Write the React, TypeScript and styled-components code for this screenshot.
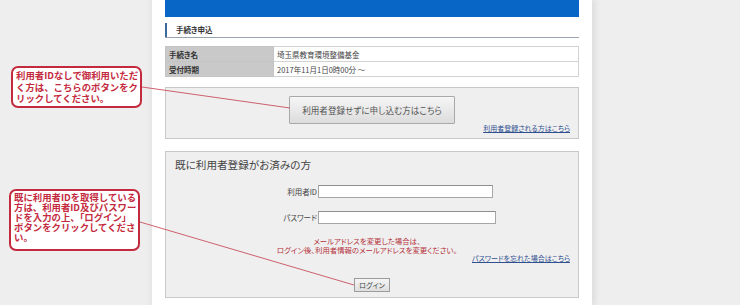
import React from "react";
import styled, { createGlobalStyle } from "styled-components";

const GlobalStyle = createGlobalStyle`
  html, body { margin: 0; padding: 0; background: #eeeeee; }
  body {
    font-family: "Noto Sans CJK JP", "Noto Sans", "Liberation Sans", sans-serif;
    font-feature-settings: "palt";
    color: #333;
  }
`;

const Page = styled.div`
  position: relative;
  width: 740px;
  height: 305px;
  overflow: hidden;
  background: #eeeeee;
  display: flex;
`;

const Column = styled.div`
  margin-left: 152px;
  width: 414px;
  padding: 0 13px;
  background: #ffffff;
  box-shadow: -3px 0 3px #e6e6e6, 4px 0 4px #e0e0e0;
  display: flex;
  flex-direction: column;
`;

const TopBar = styled.div`
  height: 17px;
  background: #0866c6;
`;

const HeadingRow = styled.div`
  margin-top: 6px;
  border-bottom: 1px solid #9aa4ae;
`;

const HeadingText = styled.div`
  height: 14px;
  line-height: 14px;
  border-left: 2px solid #3c6a98;
  padding-left: 9px;
  font-size: 7.5px;
  font-weight: bold;
  color: #333;
`;

const InfoTable = styled.table`
  margin-top: 8px;
  width: 414px;
  border-collapse: collapse;
  font-size: 7.5px;
`;

const LabelCell = styled.th`
  width: 104px;
  height: 14px;
  padding: 0 0 0 3px;
  text-align: left;
  background: #c9c9c9;
  border: 1px solid #c4c4c4;
  font-weight: bold;
  color: #333;
  line-height: 13px;
`;

const ValueCell = styled.td`
  height: 14px;
  padding: 0 0 0 3px;
  border: 1px solid #d2d2d2;
  color: #444;
  line-height: 13px;
`;

const Panel = styled.div<{ $top: number; $height: number }>`
  margin-top: ${(p) => p.$top}px;
  height: ${(p) => p.$height}px;
  box-sizing: border-box;
  background: #efefef;
  border: 1px solid #c8c8c8;
  display: flex;
  flex-direction: column;
`;

const GuestButton = styled.button`
  align-self: center;
  margin-top: 8px;
  width: 166px;
  height: 28px;
  border: 1px solid #a9a9a9;
  border-radius: 1px;
  background: linear-gradient(#f6f6f6, #dcdcdc);
  color: #555;
  font-family: inherit;
  font-feature-settings: "palt";
  font-size: 8.6px;
  padding: 0;
`;

const LinkRow = styled.div<{ $top?: number }>`
  display: flex;
  justify-content: flex-end;
  padding-right: 8px;
  margin-top: ${(p) => p.$top ?? 0}px;
`;

const TextLink = styled.a`
  font-size: 7px;
  line-height: 9px;
  color: #2f4f8f;
  text-decoration: underline;
`;

const PanelTitle = styled.div`
  margin-top: 6px;
  padding-left: 9px;
  font-size: 10.6px;
  line-height: 14px;
  color: #444;
`;

const FormGrid = styled.div`
  margin-top: 13px;
  display: grid;
  grid-template-columns: 152px auto;
  row-gap: 13px;
  align-items: center;
`;

const FieldLabel = styled.label`
  text-align: right;
  padding-right: 1px;
  font-size: 7.5px;
  color: #444;
`;

const TextInput = styled.input<{ $w: number }>`
  width: ${(p) => p.$w}px;
  height: 13px;
  box-sizing: border-box;
  border: 1px solid #a6a6a6;
  border-top-color: #8e8e8e;
  background: #fff;
  padding: 0;
  margin: 0;
`;

const Notice = styled.div`
  margin-top: 12px;
  text-align: center;
  font-size: 7.4px;
  line-height: 9px;
  color: #b5303a;
  padding-right: 10px;
`;

const LoginButton = styled.button`
  align-self: center;
  margin-top: 15px;
  width: 36px;
  height: 14px;
  border: 1px solid #9c9c9c;
  background: linear-gradient(#f5f5f5, #dedede);
  font-family: inherit;
  font-feature-settings: "palt";
  font-size: 7px;
  color: #444;
  padding: 0;
`;

const Callout = styled.div<{ $left: number; $top: number; $h: number; $lh: number; $pt: number }>`
  position: absolute;
  left: ${(p) => p.$left}px;
  top: ${(p) => p.$top}px;
  width: 131px;
  height: ${(p) => p.$h}px;
  box-sizing: border-box;
  border: 2px solid #c42a3e;
  border-radius: 7px;
  background: #fff;
  padding: ${(p) => p.$pt}px 2px 0 3px;
  color: #c42a3e;
  font-size: 9.4px;
  font-weight: bold;
  font-feature-settings: normal;
  line-height: ${(p) => p.$lh}px;
  white-space: nowrap;
`;

const Leaders = styled.svg`
  position: absolute;
  left: 0;
  top: 0;
  pointer-events: none;
`;

export default function App() {
  return (
    <>
      <GlobalStyle />
      <Page>
        <Column>
          <TopBar />
          <HeadingRow>
            <HeadingText>手続き申込</HeadingText>
          </HeadingRow>
          <InfoTable>
            <tbody>
              <tr>
                <LabelCell>手続き名</LabelCell>
                <ValueCell>埼玉県教育環境整備基金</ValueCell>
              </tr>
              <tr>
                <LabelCell>受付時期</LabelCell>
                <ValueCell>2017年11月1日0時00分 ～</ValueCell>
              </tr>
            </tbody>
          </InfoTable>
          <Panel $top={10} $height={52}>
            <GuestButton>利用者登録せずに申し込む方はこちら</GuestButton>
            <LinkRow $top={0}>
              <TextLink href="#">利用者登録される方はこちら</TextLink>
            </LinkRow>
          </Panel>
          <Panel $top={12} $height={147}>
            <PanelTitle>既に利用者登録がお済みの方</PanelTitle>
            <FormGrid>
              <FieldLabel>利用者ID</FieldLabel>
              <TextInput $w={175} type="text" />
              <FieldLabel>パスワード</FieldLabel>
              <TextInput $w={178} type="password" />
            </FormGrid>
            <Notice>
              メールアドレスを変更した場合は、
              <br />
              ログイン後、利用者情報のメールアドレスを変更ください。
            </Notice>
            <LinkRow>
              <TextLink href="#">パスワードを忘れた場合はこちら</TextLink>
            </LinkRow>
            <LoginButton>ログイン</LoginButton>
          </Panel>
        </Column>
        <Callout $left={11} $top={66} $h={42} $lh={11.5} $pt={2}>
          利用者IDなしで御利用いただ
          <br />
          く方は、こちらのボタンをク
          <br />
          リックしてください。
        </Callout>
        <Callout $left={9} $top={189} $h={62} $lh={10} $pt={1}>
          既に利用者IDを取得している
          <br />
          方は、利用者ID及びパスワー
          <br />
          ドを入力の上、「ログイン」
          <br />
          ボタンをクリックしてくださ
          <br />
          い。
        </Callout>
        <Leaders width="740" height="305" viewBox="0 0 740 305">
          <line x1="142" y1="87" x2="290" y2="108" stroke="#c8505f" strokeWidth="0.9" />
          <line x1="140" y1="222" x2="354" y2="285" stroke="#c8505f" strokeWidth="0.9" />
        </Leaders>
      </Page>
    </>
  );
}
